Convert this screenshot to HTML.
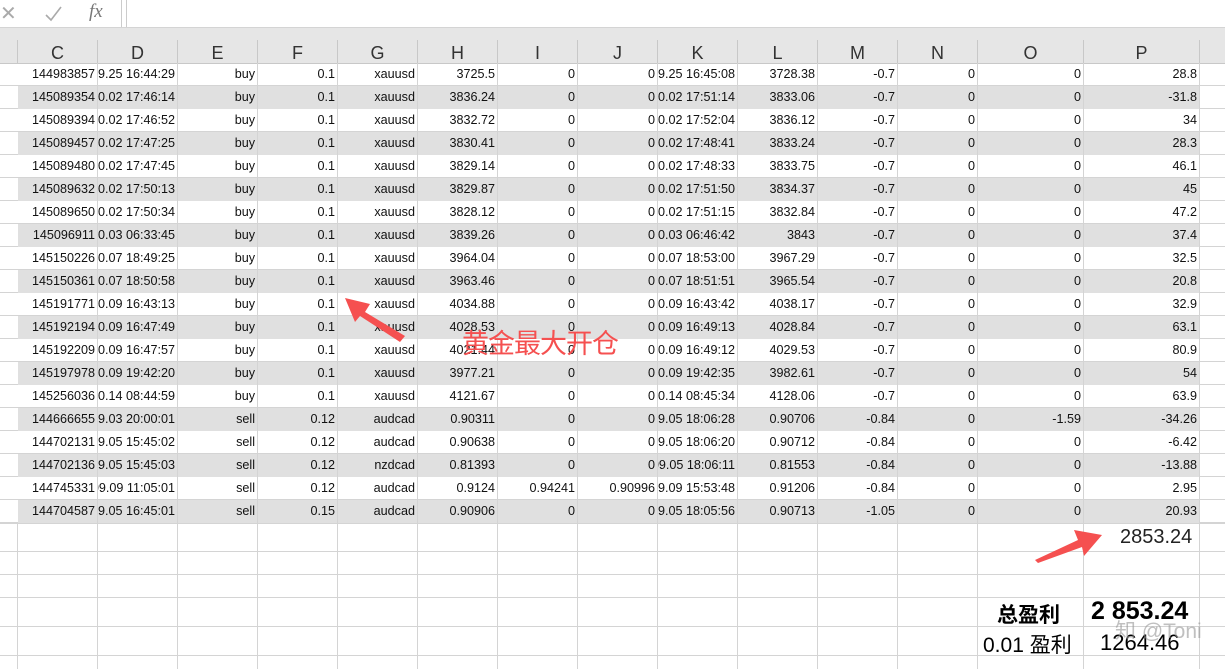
<!DOCTYPE html><html><head><meta charset="utf-8"><style>
body{margin:0;width:1225px;height:669px;overflow:hidden;background:#fff;font-family:"Liberation Sans","Noto Sans CJK SC",sans-serif;position:relative}
.fb{position:absolute;left:0;top:0;width:1225px;height:27px;background:#fff;border-bottom:1px solid #d4d4d4}
.band{position:absolute;left:0;top:28px;width:1225px;height:35px;background:#e6e6e6;border-bottom:1px solid #c8c8c8}
.hdr{position:absolute;top:40px;height:23px;font-size:18px;color:#333;text-align:center;line-height:26px;border-right:1px solid #c8c8c8;box-sizing:border-box}
.c{position:absolute;height:23px;font-size:12.6px;line-height:23px;text-align:right;padding-right:2px;box-sizing:border-box;overflow:hidden;white-space:nowrap;border-right:1px solid #d4d4d4;direction:rtl;color:#111}
.g{background:#e0e0e0}
.hl{position:absolute;left:0;width:1225px;height:1px;background:#d4d4d4}
.vl{position:absolute;width:1px;background:#d4d4d4}
</style></head><body>
<div class="fb">
<span style="position:absolute;left:0;top:1px;font-size:20px;color:#aaa">✕</span>
<svg style="position:absolute;left:44px;top:5px" width="20" height="18"><path d="M2 10 L7 15 L17 2" fill="none" stroke="#aaa" stroke-width="1.6"/></svg>
<span style="position:absolute;left:89px;top:1px;font-size:19px;color:#777;font-style:italic;font-family:'Liberation Serif',serif">fx</span>
<div style="position:absolute;left:121px;top:0;width:4px;height:27px;border-left:1px solid #ccc;border-right:1px solid #ccc"></div>
</div>
<div class="band"></div>
<div id="g"></div>
<svg style="position:absolute;left:0;top:0" width="1225" height="669">
<path d="M405 336 L365 312 L370 304 L345 298 L355 322 L360 316 L400 342Z" fill="#f55050"/>
<path d="M1035 560 L1078 540 L1074 530 L1102 535 L1084 556 L1082 547 L1038 563Z" fill="#f55050"/>
</svg>
<div style="position:absolute;left:462px;top:322px;font-size:27px;color:#f55050;font-family:'Noto Sans CJK SC',sans-serif;letter-spacing:-1px">黄金最大开仓</div>
<div style="position:absolute;left:1120px;top:526px;font-size:20px;color:#222">2853.24</div>
<div style="position:absolute;left:997px;top:599px;font-size:21px;font-weight:bold;font-family:'Noto Sans CJK SC',sans-serif">总盈利</div>
<div style="position:absolute;left:1091px;top:597px;font-size:25px;font-weight:bold">2 853.24</div>
<div style="position:absolute;left:983px;top:629px;font-size:21px;font-family:'Liberation Sans','Noto Sans CJK SC',sans-serif">0.01 盈利</div>
<div style="position:absolute;left:1100px;top:630px;font-size:22px">1264.46</div>
<div style="position:absolute;left:1115px;top:615px;font-size:21px;color:rgba(150,150,150,.6);font-family:'Liberation Sans','Noto Sans CJK SC',sans-serif">知 @Toni</div>
<script>
var cols=[18,98,178,258,338,418,498,578,658,738,818,898,978,1084,1200];
var L="CDEFGHIJKLMNOP";
var h='';
h+='<div class="hdr" style="left:0;width:18px"></div>';
for(var i=0;i<14;i++)h+='<div class="hdr" style="left:'+cols[i]+'px;width:'+(cols[i+1]-cols[i])+'px">'+L[i]+'</div>';
var R=[
["144983857","2025.09.25 16:44:29","buy","0.1","xauusd","3725.5","0","0","2025.09.25 16:45:08","3728.38","-0.7","0","0","28.8"],
["145089354","2025.10.02 17:46:14","buy","0.1","xauusd","3836.24","0","0","2025.10.02 17:51:14","3833.06","-0.7","0","0","-31.8"],
["145089394","2025.10.02 17:46:52","buy","0.1","xauusd","3832.72","0","0","2025.10.02 17:52:04","3836.12","-0.7","0","0","34"],
["145089457","2025.10.02 17:47:25","buy","0.1","xauusd","3830.41","0","0","2025.10.02 17:48:41","3833.24","-0.7","0","0","28.3"],
["145089480","2025.10.02 17:47:45","buy","0.1","xauusd","3829.14","0","0","2025.10.02 17:48:33","3833.75","-0.7","0","0","46.1"],
["145089632","2025.10.02 17:50:13","buy","0.1","xauusd","3829.87","0","0","2025.10.02 17:51:50","3834.37","-0.7","0","0","45"],
["145089650","2025.10.02 17:50:34","buy","0.1","xauusd","3828.12","0","0","2025.10.02 17:51:15","3832.84","-0.7","0","0","47.2"],
["145096911","2025.10.03 06:33:45","buy","0.1","xauusd","3839.26","0","0","2025.10.03 06:46:42","3843","-0.7","0","0","37.4"],
["145150226","2025.10.07 18:49:25","buy","0.1","xauusd","3964.04","0","0","2025.10.07 18:53:00","3967.29","-0.7","0","0","32.5"],
["145150361","2025.10.07 18:50:58","buy","0.1","xauusd","3963.46","0","0","2025.10.07 18:51:51","3965.54","-0.7","0","0","20.8"],
["145191771","2025.10.09 16:43:13","buy","0.1","xauusd","4034.88","0","0","2025.10.09 16:43:42","4038.17","-0.7","0","0","32.9"],
["145192194","2025.10.09 16:47:49","buy","0.1","xauusd","4028.53","0","0","2025.10.09 16:49:13","4028.84","-0.7","0","0","63.1"],
["145192209","2025.10.09 16:47:57","buy","0.1","xauusd","4021.44","0","0","2025.10.09 16:49:12","4029.53","-0.7","0","0","80.9"],
["145197978","2025.10.09 19:42:20","buy","0.1","xauusd","3977.21","0","0","2025.10.09 19:42:35","3982.61","-0.7","0","0","54"],
["145256036","2025.10.14 08:44:59","buy","0.1","xauusd","4121.67","0","0","2025.10.14 08:45:34","4128.06","-0.7","0","0","63.9"],
["144666655","2025.09.03 20:00:01","sell","0.12","audcad","0.90311","0","0","2025.09.05 18:06:28","0.90706","-0.84","0","-1.59","-34.26"],
["144702131","2025.09.05 15:45:02","sell","0.12","audcad","0.90638","0","0","2025.09.05 18:06:20","0.90712","-0.84","0","0","-6.42"],
["144702136","2025.09.05 15:45:03","sell","0.12","nzdcad","0.81393","0","0","2025.09.05 18:06:11","0.81553","-0.84","0","0","-13.88"],
["144745331","2025.09.09 11:05:01","sell","0.12","audcad","0.9124","0.94241","0.90996","2025.09.09 15:53:48","0.91206","-0.84","0","0","2.95"],
["144704587","2025.09.05 16:45:01","sell","0.15","audcad","0.90906","0","0","2025.09.05 18:05:56","0.90713","-1.05","0","0","20.93"]];
for(var r=0;r<20;r++){var y=63+r*23;var g=r%2?' g':'';
 h+='<div class="hl" style="top:'+(y+22)+'px"></div>';
 for(var i=0;i<14;i++){var t=R[r][i];h+='<div class="c'+g+'" style="left:'+cols[i]+'px;top:'+y+'px;width:'+(cols[i+1]-cols[i])+'px"><span style="direction:ltr;unicode-bidi:embed">'+t+'</span></div>';}
}
var ys=[523,551,574,597,626,655];
for(var k=0;k<6;k++)h+='<div class="hl" style="top:'+ys[k]+'px"></div>';
for(var i=0;i<cols.length;i++)h+='<div class="vl" style="left:'+(cols[i]-1)+'px;top:523px;height:146px"></div>';
document.getElementById('g').innerHTML=h;
</script>
</body></html>
